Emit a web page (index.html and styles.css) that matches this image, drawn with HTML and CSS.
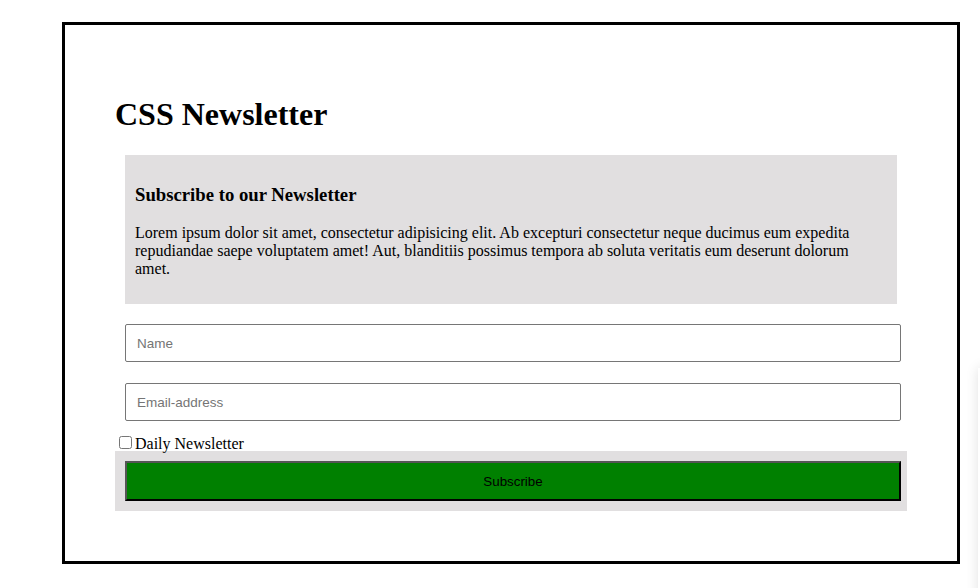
FILE: index.html
```html
<!DOCTYPE html>
<html>
<head>
<meta charset="utf-8">
<title>CSS Newsletter</title>
<link rel="stylesheet" href="styles.css">
</head>
<body>
<div class="frame">
  <h1 class="title">CSS Newsletter</h1>
  <div class="intro">
    <h3 class="intro-head">Subscribe to our Newsletter</h3>
    <p class="intro-text">Lorem ipsum dolor sit amet, consectetur adipisicing elit. Ab excepturi consectetur neque ducimus eum expedita repudiandae saepe voluptatem amet! Aut, blanditiis possimus tempora ab soluta veritatis eum deserunt dolorum amet.</p>
  </div>
  <input class="field field-name" type="text" placeholder="Name">
  <input class="field field-email" type="text" placeholder="Email-address">
  <label class="check"><input class="check-box" type="checkbox">Daily Newsletter</label>
  <div class="submit-wrap">
    <button class="submit" type="button">Subscribe</button>
  </div>
</div>
<div class="edge-shadow"></div>
</body>
</html>
```

FILE: styles.css
```css
html, body {
  margin: 0;
  padding: 0;
  background: #ffffff;
}

body {
  font-family: "Liberation Serif", "Times New Roman", serif;
  font-size: 16px;
  color: #000;
  overflow: hidden;
}

.frame {
  width: 792px;
  margin: 22px 0 0 62px;
  padding: 50px;
  border: 3px solid #000;
}

.title {
  font-size: 32px;
  font-weight: bold;
  margin: 21.44px 0;
}

.intro {
  margin: 0 10px;
  padding: 10px;
  background: #e1dfe0;
}

.intro-head {
  font-size: 18.72px;
  font-weight: bold;
  margin: 18.72px 0;
}

.intro-text {
  margin: 16px 0;
}

.field {
  display: block;
  box-sizing: border-box;
  width: 776px;
  height: 38px;
  margin: 20px 10px 0;
  padding: 0 11px;
  border: 1px solid #767676;
  border-radius: 2px;
  font-family: "Liberation Sans", Arial, sans-serif;
  font-size: 13.5px;
  color: #000;
  background: #fff;
  outline: none;
}

.field::placeholder {
  color: #757575;
}

.field-email {
  margin-top: 21px;
  margin-bottom: 12px;
}

.check {
  display: block;
  height: 18px;
  line-height: normal;
}

.check-box {
  margin: 3px 3px 3px 4px;
  width: 13px;
  height: 13px;
  vertical-align: baseline;
}

.submit-wrap {
  background: #e1dfe0;
  padding: 10px;
}

.submit {
  display: block;
  box-sizing: border-box;
  width: 776px;
  height: 40px;
  margin: 0;
  background: #008000;
  border-style: solid;
  border-width: 2px;
  border-color: #555555 #000000 #000000 #555555;
  font-family: "Liberation Sans", Arial, sans-serif;
  font-size: 13.33px;
  color: #000;
  padding: 0;
}

.edge-shadow {
  position: fixed;
  left: 978px;
  top: 368px;
  width: 60px;
  height: 400px;
  background: #fff;
  box-shadow: 0 0 12px rgba(0, 0, 0, 0.12);
}
```
